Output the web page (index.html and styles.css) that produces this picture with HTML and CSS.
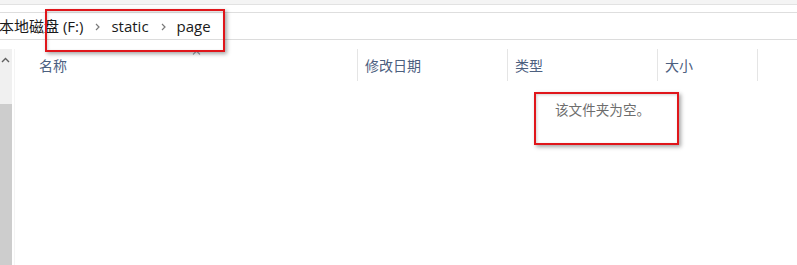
FILE: index.html
```html
<!DOCTYPE html>
<html lang="zh-CN">
<head>
<meta charset="utf-8">
<link rel="stylesheet" href="styles.css">
</head>
<body>
<div class="window">
  <div class="chrome"></div>
  <div class="address">
    <span class="crumb">本地磁盘 (F:)</span>
    <svg class="chev" width="5" height="8" viewBox="0 0 5 8"><path d="M1 1 L4 4 L1 7" fill="none" stroke="#7a7a7a" stroke-width="1.2"/></svg>
    <span class="crumb">static</span>
    <svg class="chev" width="5" height="8" viewBox="0 0 5 8"><path d="M1 1 L4 4 L1 7" fill="none" stroke="#7a7a7a" stroke-width="1.2"/></svg>
    <span class="crumb">page</span>
  </div>
  <div class="main">
    <div class="scroll">
      <div class="track">
        <svg class="up" width="9" height="6" viewBox="0 0 9 6"><path d="M1 5 L4.5 1.5 L8 5" fill="none" stroke="#606060" stroke-width="1.4"/></svg>
      </div>
      <div class="thumb"></div>
    </div>
    <div class="content">
      <div class="header">
        <div class="col name">名称
          <svg class="sort" width="9" height="5" viewBox="0 0 9 5"><path d="M1 4.5 L4.5 1 L8 4.5" fill="none" stroke="#9aa3ad" stroke-width="1.1"/></svg>
        </div>
        <div class="col date">修改日期</div>
        <div class="col type">类型</div>
        <div class="col size">大小</div>
        <div class="col tail"></div>
      </div>
      <div class="empty">该文件夹为空。</div>
    </div>
  </div>
  <div class="mark mark-path"></div>
  <div class="mark mark-empty"></div>
</div>
</body>
</html>
```
FILE: styles.css
```css
* { box-sizing: border-box; }
html, body { margin: 0; padding: 0; }
body {
  width: 797px;
  height: 265px;
  overflow: hidden;
  background: #ffffff;
  font-family: "Open Sans", "Noto Sans CJK SC", sans-serif;
}
.window {
  position: relative;
  width: 797px;
  height: 265px;
  display: flex;
  flex-direction: column;
}
.chrome {
  height: 5px;
  background: #f4f4f4;
  border-bottom: 1px solid #e2e2e2;
  margin-bottom: 7px;
  flex: none;
}
.address {
  flex: none;
  height: 28px;
  border-top: 1px solid #dedede;
  border-bottom: 1px solid #dcdcdc;
  display: flex;
  align-items: center;
  font-size: 15px;
  color: #1a1a1a;
  margin-bottom: 9px;
  margin-left: -1px;
}
.crumb { white-space: nowrap; line-height: 20px; }
.chev { margin: 1px 11px 0 12px; flex: none; }
.main {
  flex: 1;
  display: flex;
  min-height: 0;
}
.scroll {
  width: 12px;
  display: flex;
  flex-direction: column;
  flex: none;
}
.track {
  height: 55px;
  background: #f0f0f0;
  display: flex;
  justify-content: center;
  padding-top: 8px;
  padding-right: 2px;
}
.up { display: block; }
.thumb {
  flex: 1;
  background: #cdcdcd;
}
.content {
  flex: 1;
  margin-left: 2px;
  border-left: 1px solid #f4f4f4;
}
.header {
  display: grid;
  grid-template-columns: 342px 150px 150px 100px 40px;
  height: 32px;
  font-size: 14px;
  color: #4c607f;
}
.col {
  display: flex;
  align-items: center;
  padding-left: 7px;
  border-left: 1px solid #e5e5e5;
  white-space: nowrap;
}
.col.name {
  position: relative;
  border-left: none;
  padding-left: 24px;
}
.sort {
  position: absolute;
  left: 177px;
  top: 1px;
}
.empty {
  margin-top: 19px;
  padding-left: 540px;
  font-size: 13.6px;
  line-height: 20px;
  color: #6d6d6d;
  white-space: nowrap;
}
.mark {
  position: absolute;
  border: 2px solid #e0161b;
  box-shadow: 2px 2px 4px rgba(0, 0, 0, 0.35), inset 1px 1px 3px rgba(0, 0, 0, 0.18);
}
.mark-path {
  left: 45px;
  top: 9px;
  width: 180px;
  height: 43px;
}
.mark-empty {
  left: 534px;
  top: 92px;
  width: 145px;
  height: 53px;
}
```
